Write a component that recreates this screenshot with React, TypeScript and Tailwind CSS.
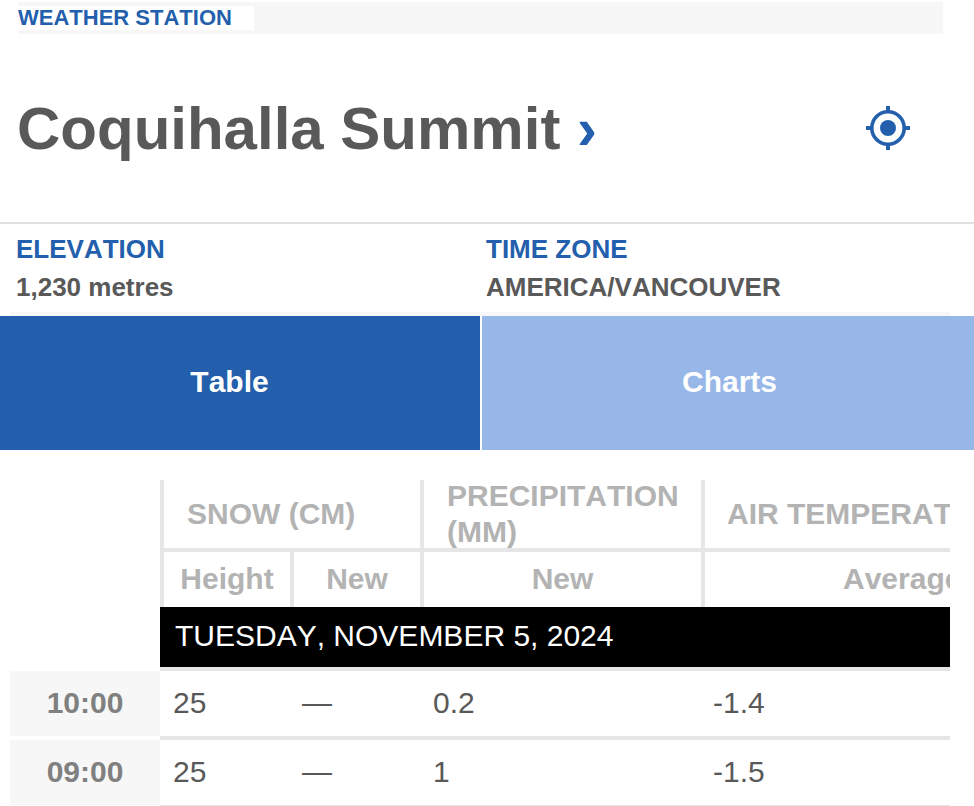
const FONT = "font-['Liberation_Sans',Arial,sans-serif]";

function Target() {
  return (
    <svg width="44" height="44" viewBox="0 0 44 44" className="block">
      <circle cx="22" cy="22" r="16.2" fill="none" stroke="#235fac" strokeWidth="3.6" />
      <circle cx="22" cy="22" r="8" fill="#235fac" />
      <rect x="20" y="0" width="4" height="6" fill="#235fac" />
      <rect x="20" y="38" width="4" height="6" fill="#235fac" />
      <rect x="0" y="20" width="6" height="4" fill="#235fac" />
      <rect x="38" y="20" width="6" height="4" fill="#235fac" />
    </svg>
  );
}

function Row({ time, height, fresh, precip, temp }: { time: string; height: string; fresh: string; precip: string; temp: string }) {
  return (
    <div className="flex h-[65px] items-center">
      <div className="ml-[10px] flex h-full w-[150px] items-center justify-center bg-[#f7f7f7] pb-[2px] text-[30px] font-bold text-[#808080]">{time}</div>
      <div className="flex h-full w-[790px] items-center pb-[2px] text-[30px] text-[#595959]">
        <span className="w-[130px] pl-[13px]">{height}</span>
        <span className="w-[130px] pl-[12px]">{fresh}</span>
        <span className="w-[282px] pl-[13px]">{precip}</span>
        <span className="pl-[11px]">{temp}</span>
      </div>
    </div>
  );
}

function Sep({ thin }: { thin?: boolean }) {
  return (
    <div className="flex">
      <div className="ml-[160px] w-[790px]">
        <div className={thin ? "h-[1px] bg-[#e6e6e6]" : "h-[4px] bg-[#e6e6e6]"} />
      </div>
    </div>
  );
}

export default function App() {
  return (
    <div className={`${FONT} h-[806px] w-[974px] overflow-hidden bg-white [font-kerning:none]`}>
      <div className="ml-[18px] mt-[2px] flex h-[32px] w-[925px] items-center bg-[#f7f7f7]">
        <div className="flex h-[24px] w-[236px] items-center bg-white text-[22px] font-bold leading-none text-[#235fac]">WEATHER STATION</div>
      </div>

      <div className="flex h-[188px] items-center justify-between pl-[17px] pr-[64px] pt-[2px]">
        <h1 className="text-[60px] font-bold leading-none text-[#595959]">
          Coquihalla Summit <span className="text-[#235fac]">›</span>
        </h1>
        <div className="-mt-[2px]">
          <Target />
        </div>
      </div>

      <div className="h-[94px] border-t-2 border-[#e0e0e0]">
        <div className="ml-[10px] h-[92px] w-[940px] border-b-4 border-[#f7f7f7]">
          <div className="grid grid-cols-[470px_470px] pt-[9px] text-[26px] font-bold">
            <div className="pl-[6px]">
              <div className="leading-[32px] text-[#235fac]">ELEVATION</div>
              <div className="mt-[7px] leading-[30px] text-[#595959]">1,230 metres</div>
            </div>
            <div className="pl-[6px]">
              <div className="leading-[32px] text-[#235fac]">TIME ZONE</div>
              <div className="mt-[7px] leading-[30px] text-[#595959]">AMERICA/VANCOUVER</div>
            </div>
          </div>
        </div>
      </div>

      <div className="flex h-[134px] gap-[2px] pb-0 text-[30px] font-bold text-white">
        <div className="flex w-[480px] items-center justify-center bg-[#235fac] pb-[3px] pr-[21px]">Table</div>
        <div className="flex w-[492px] flex-1 items-center justify-center bg-[#97b7e8] pb-[3px] pl-[3px]">Charts</div>
      </div>

      <div className="mt-[30px]">
        <div className="ml-[160px] w-[790px] overflow-hidden">
          <div className="flex h-[72px] w-[1100px] border-b-4 border-[#e6e6e6] text-[30px] font-bold text-[#b3b3b3]">
            <div className="flex w-[260px] items-center border-l-4 border-[#e6e6e6] pb-[2px] pl-[23px]">SNOW (CM)</div>
            <div className="flex w-[281px] items-center border-l-4 border-[#e6e6e6] pl-[23px] leading-[36px]">PRECIPITATION (MM)</div>
            <div className="flex w-[559px] items-center whitespace-nowrap border-l-4 border-[#e6e6e6] pb-[2px] pl-[22px]">AIR TEMPERATURE (°C)</div>
          </div>
          <div className="flex h-[55px] w-[1100px] pb-[2px] text-[30px] font-bold text-[#b3b3b3]">
            <div className="-mb-[2px] flex w-[130px] items-center justify-center border-l-4 border-[#e6e6e6] pb-[2px]">Height</div>
            <div className="-mb-[2px] flex w-[130px] items-center justify-center border-l-4 border-[#e6e6e6] pb-[2px]">New</div>
            <div className="-mb-[2px] flex w-[281px] items-center justify-center border-l-4 border-[#e6e6e6] pb-[2px]">New</div>
            <div className="-mb-[2px] flex w-[559px] items-center border-l-4 border-[#e6e6e6] pb-[2px] pl-[138px]">Average</div>
          </div>
          <div className="flex h-[60px] items-center bg-black pb-[3px] pl-[15px] text-[30px] text-white">TUESDAY, NOVEMBER 5, 2024</div>
        </div>
        <Sep />
        <Row time="10:00" height="25" fresh="—" precip="0.2" temp="-1.4" />
        <Sep />
        <Row time="09:00" height="25" fresh="—" precip="1" temp="-1.5" />
        <Sep thin />
      </div>
    </div>
  );
}
